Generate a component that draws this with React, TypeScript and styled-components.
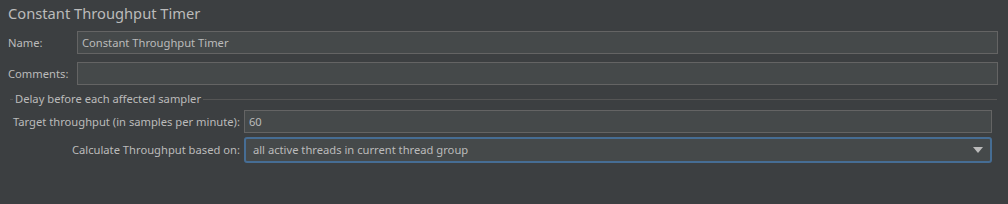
import React from "react";
import styled, { createGlobalStyle } from "styled-components";

const GlobalStyle = createGlobalStyle`
  html, body {
    margin: 0;
    padding: 0;
    background: #3c3f41;
  }
  body {
    font-family: "Noto Sans", "Open Sans", sans-serif;
    color: #bbbbbb;
  }
`;

const Panel = styled.div`
  width: 1008px;
  height: 204px;
  box-sizing: border-box;
  padding: 3px 10px 0 8px;
  background: #3c3f41;
`;

const Title = styled.h1`
  margin: 0;
  height: 28px;
  font-size: 14.7px;
  font-weight: 400;
  line-height: 20px;
  color: #bbbbbb;
`;

const TopForm = styled.div`
  display: grid;
  grid-template-columns: 69px 1fr;
  row-gap: 8px;
  align-items: center;
`;

const Label = styled.label<{ $right?: boolean }>`
  font-size: 11.2px;
  line-height: 16px;
  white-space: nowrap;
  justify-self: ${(p) => (p.$right ? "end" : "start")};
`;

const TextField = styled.div`
  height: 23px;
  box-sizing: border-box;
  border: 1px solid #646464;
  background: #45494a;
  padding: 0 4px;
  font-size: 11.2px;
  line-height: 21px;
  color: #bbbbbb;
`;

const Group = styled.fieldset`
  margin: 6px 1px 0 2px;
  padding: 3px 5px 0 3px;
  border: none;
  border-top: 1px solid #555555;
  min-width: 0;
`;

const Legend = styled.legend`
  margin-left: 0;
  padding: 0 2px;
  font-size: 11.2px;
  line-height: 16px;
`;

const GroupForm = styled.div`
  display: grid;
  grid-template-columns: auto 1fr;
  column-gap: 4px;
  row-gap: 4px;
  align-items: center;
`;

const Combo = styled.div`
  position: relative;
  height: 26px;
  box-sizing: border-box;
  border: 2px solid #466d94;
  border-radius: 3px;
  background: #45494a;
  padding: 0 24px 0 7px;
  font-size: 11.2px;
  line-height: 22px;
  color: #bbbbbb;
`;

const Arrow = styled.svg`
  position: absolute;
  right: 7px;
  top: 8px;
`;

export default function App() {
  return (
    <>
      <GlobalStyle />
      <Panel>
        <Title>Constant Throughput Timer</Title>
        <TopForm>
          <Label>Name:</Label>
          <TextField>Constant Throughput Timer</TextField>
          <Label>Comments:</Label>
          <TextField />
        </TopForm>
        <Group>
          <Legend>Delay before each affected sampler</Legend>
          <GroupForm>
            <Label $right>Target throughput (in samples per minute):</Label>
            <TextField>60</TextField>
            <Label $right>Calculate Throughput based on:</Label>
            <Combo>
              all active threads in current thread group
              <Arrow width="10" height="6" viewBox="0 0 10 6">
                <path d="M0 0 H10 L5 6 Z" fill="#bbbbbb" />
              </Arrow>
            </Combo>
          </GroupForm>
        </Group>
      </Panel>
    </>
  );
}
